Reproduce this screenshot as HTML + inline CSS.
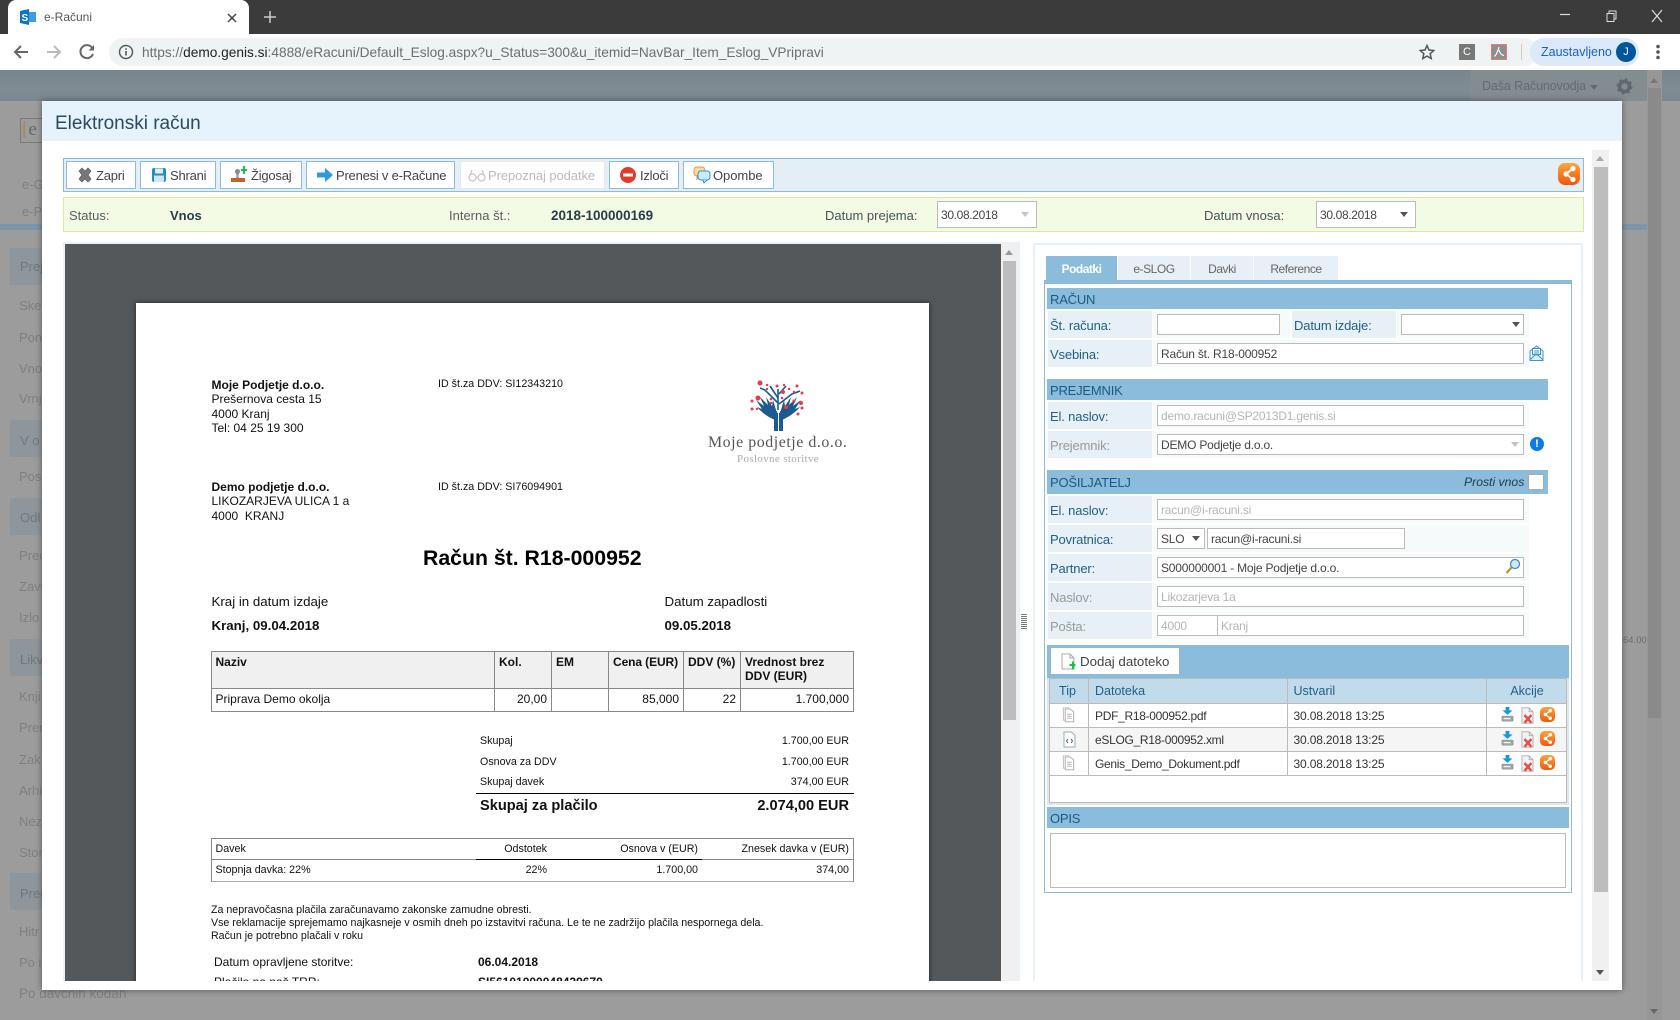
<!DOCTYPE html>
<html lang="sl"><head><meta charset="utf-8"><title>e-Računi</title>
<style>
*{box-sizing:border-box}
html,body{margin:0;padding:0;width:1680px;height:1020px;overflow:hidden;background:#9c9c9c}
body{position:relative;font-family:"Liberation Sans",sans-serif;font-size:13px;color:#333}
.a{position:absolute;white-space:nowrap}
.t{position:absolute;white-space:nowrap;line-height:18px;height:18px}
.side{color:#7b8083;font-size:13px}
.blk{background:#8f969b;left:10px;width:32px;height:37px;position:absolute}
.btn{position:absolute;top:161px;height:28px;background:#fff;border:1px solid #8bbcdc;color:#444;font-size:13px;letter-spacing:-.22px;line-height:28px}
.btn svg{position:absolute;top:4px;width:18px;height:18px}
.btn span{position:absolute;top:0}
.sec{position:absolute;left:1047px;width:501px;background:#8bbcdc;color:#1a5a82;font-size:13px;letter-spacing:-.2px;line-height:23px;padding-left:3px;height:21px}
.lb{position:absolute;left:1048px;width:104px;height:27px;background:#e6f0f6;color:#1f5f85;font-size:13px;letter-spacing:-.15px;line-height:29px;padding-left:2px}
.lb.d{color:#999}
.fc{position:absolute;left:1153px;width:376px;height:27px;background:#f6fafb}
.in{position:absolute;height:21px;background:#fff;border:1px solid #bbb;font-size:12px;letter-spacing:-.2px;line-height:21px;padding-left:3px;color:#444}
.in.g{color:#b5b5b5}
.arr{position:absolute;width:0;height:0;border-left:4px solid transparent;border-right:4px solid transparent;border-top:5px solid #555}
.tab{position:absolute;top:256px;height:24px;background:#e6f0f6;color:#666;font-size:12px;letter-spacing:-.45px;line-height:26px;text-align:center}
.th{position:absolute;top:678px;height:26px;background:#c1dbeb;color:#1f6088;font-size:12.5px;line-height:27px;border-right:1px solid #bbb;border-bottom:1px solid #bbb}
.td{position:absolute;height:24px;border-right:1px solid #bbb;border-bottom:1px solid #bbb;font-size:12px;letter-spacing:-.3px;line-height:25px;color:#333;background:#fff}
.d2{letter-spacing:-.16px}
.alt{background:#f5f5f5}
.inv{position:absolute;white-space:nowrap;color:#111;font-size:12px;line-height:14px}
.s{font-size:10.7px}
.b{font-weight:bold}
.ln{position:absolute;background:#888}
.r{text-align:right}
</style></head><body>

<svg width="0" height="0" style="position:absolute">
<defs>
<linearGradient id="og" x1="0" y1="0" x2="0" y2="1"><stop offset="0" stop-color="#ffa43c"/><stop offset="1" stop-color="#f2570c"/></linearGradient>
<symbol id="share" viewBox="0 0 22 22"><rect x="0" y="0" width="22" height="22" rx="7" fill="url(#og)"/><path d="M15 5.500 L8 11 L15 16.500" fill="none" stroke="#fff" stroke-width="1.800"/><circle cx="15" cy="5.500" r="2.600" fill="#fff"/><circle cx="8" cy="11" r="2.600" fill="#fff"/><circle cx="15" cy="16.500" r="2.600" fill="#fff"/></symbol>
<symbol id="file" viewBox="0 0 16 20" preserveAspectRatio="none"><path d="M4.500 2.500H10l3.500 3.500V18.500H4.500Z" fill="#fff" stroke="#aaa"/><path d="M2.500 1H8L11 4" fill="none" stroke="#bbb"/><path d="M2.500 1V16.500H4.500" fill="none" stroke="#bbb"/><path d="M6.500 9h5M6.500 11.500h5M6.500 14h5" stroke="#aaa"/></symbol>
<symbol id="dl" viewBox="0 0 14 18" preserveAspectRatio="none"><rect x="1" y="11" width="12" height="6" rx="1" fill="#a8acae" stroke="#777" stroke-width=".6"/><rect x="3" y="13.400" width="8" height="1.200" fill="#fff"/><circle cx="11" cy="14" r=".8" fill="#4c4"/><path d="M5 0h4v4h3.500L7 9.500 1.500 4H5Z" fill="#129be4"/></symbol>
<symbol id="del" viewBox="0 0 15 20"><path d="M1 1H9.500L14 5.500V19H1Z" fill="#f2f2f2" stroke="#aaa"/><path d="M9.500 1V5.500H14" fill="none" stroke="#aaa"/><path d="M4 9.500l8 9M12 9.500l-8 9" stroke="#e3524a" stroke-width="3"/></symbol>
</defs></svg>

<!-- chrome -->
<div class="a" style="left:0;top:0;width:1680px;height:34px;background:#3b3b3b"></div>
<div class="a" style="left:8px;top:0;width:241px;height:34px;background:#fff;border-radius:8px 8px 0 0"></div>
<svg class="a" style="left:20px;top:9px" width="17" height="16"><path d="M0 2l9-2v16l-9-2Z" fill="#0d72c4"/><rect x="9" y="3" width="7" height="10" fill="#3d9be0"/><text x="1.500" y="12" font-family="Liberation Sans" font-weight="bold" font-size="10" fill="#fff">S</text></svg>
<div class="t" style="left:44px;top:8px;font-size:12px;color:#555">e-Računi</div>
<svg class="a" style="left:226px;top:12px" width="12" height="12"><path d="M2 2l8 8M10 2l-8 8" stroke="#444" stroke-width="1.500"/></svg>
<svg class="a" style="left:263px;top:10px" width="14" height="14"><path d="M7 1v12M1 7h12" stroke="#ccc" stroke-width="1.500"/></svg>
<svg class="a" style="left:1558px;top:8px" width="110" height="16" fill="none" stroke="#ddd"><path d="M2 6.500h10" stroke-width="1.200"/><path d="M49 5.500h7v8h-7zM51 5.500V3h7v8h-2" /><path d="M94 2l10 12M104 2L94 14" stroke-width="1.200"/></svg>
<div class="a" style="left:0;top:34px;width:1680px;height:36px;background:#fff"></div>
<svg class="a" style="left:12px;top:43px" width="88" height="18" fill="none" stroke-width="2"><path d="M16 9H3M9 3L3 9l6 6" stroke="#666"/><path d="M35 9h13M42 3l6 6-6 6" stroke="#bbb"/><path d="M80 4.500A6.500 6.500 0 1 0 81 11" stroke="#666"/><path d="M82 2v5.500h-5.500Z" fill="#666" stroke="none"/></svg>
<div class="a" style="left:109px;top:38px;width:1429px;height:28px;background:#eff3f4;border-radius:14px"></div>
<svg class="a" style="left:118px;top:44px" width="16" height="16" fill="none"><circle cx="8" cy="8" r="6.500" stroke="#555" stroke-width="1.400"/><path d="M8 7v4.500M8 4.300v1.400" stroke="#555" stroke-width="1.600"/></svg>
<div class="t" style="left:142px;top:44px;font-size:13.700px;color:#6c6f72">https://<span style="color:#222">demo.genis.si</span>:4888/eRacuni/Default_Eslog.aspx?u_Status=300&amp;u_itemid=NavBar_Item_Eslog_VPripravi</div>
<svg class="a" style="left:1419px;top:44px" width="16" height="16"><path d="M8 1.500l2 4.500 4.800.5-3.600 3.200 1 4.800L8 12.100l-4.200 2.400 1-4.800L1.200 6.500 6 6Z" fill="none" stroke="#555" stroke-width="1.500"/></svg>
<div class="a" style="left:1459px;top:44px;width:16px;height:16px;background:#777;color:#fff;font-size:11px;line-height:16px;text-align:center">C</div>
<svg class="a" style="left:1491px;top:44px" width="16" height="16"><rect x=".5" y=".5" width="15" height="15" fill="#8e8e8e" stroke="#e77"/><path d="M8 3c-1 4-2 7-4.500 9.500M8 6c1 3 2 5 5 5.500" fill="none" stroke="#fff" stroke-width="1.200"/></svg>
<div class="a" style="left:1521px;top:44px;width:1px;height:16px;background:#ccc"></div>
<div class="a" style="left:1530px;top:38px;width:109px;height:28px;background:#dce9f8;border-radius:14px"></div>
<div class="t" style="left:1541px;top:43px;font-size:12.500px;color:#1a5fd0">Zaustavljeno</div>
<div class="a" style="left:1616px;top:42px;width:20px;height:20px;background:#00579c;border-radius:50%;color:#fff;font-size:11px;line-height:20px;text-align:center">J</div>
<svg class="a" style="left:1655px;top:44px" width="6" height="16" fill="#555"><circle cx="3" cy="2.500" r="1.800"/><circle cx="3" cy="8" r="1.800"/><circle cx="3" cy="13.500" r="1.800"/></svg>

<!-- dim background -->
<div class="a" style="left:0;top:70px;width:1680px;height:31px;background:linear-gradient(#78858d,#7f8c94 60%,#7a878f)"></div>
<div class="a" style="left:1470px;top:70px;width:177px;height:31px;background:#838c91"></div>
<div class="t" style="left:1482px;top:77px;color:#626b71;font-size:12.500px;letter-spacing:-.1px">Daša Računovodja</div>
<div class="arr" style="left:1590px;top:85px;border-top-color:#626b71"></div>
<svg class="a" style="left:1616px;top:78px" width="17" height="17"><circle cx="8.500" cy="8.500" r="5" fill="none" stroke="#5f686e" stroke-width="3.500"/><circle cx="8.500" cy="8.500" r="7" fill="none" stroke="#5f686e" stroke-width="2" stroke-dasharray="2.500 3"/></svg>
<div class="a" style="left:1647px;top:70px;width:15px;height:950px;background:#979797"></div>
<div class="a" style="left:1648px;top:88px;width:13px;height:630px;background:#8a8a8a"></div>
<div class="arr" style="left:1650px;top:78px;border-top:0;border-bottom:5px solid #777"></div>
<div class="arr" style="left:1650px;top:1009px;border-top-color:#666"></div>
<div class="a" style="left:1622px;top:224px;width:25px;height:6px;background:#7d95a8"></div>
<div class="t" style="left:1623px;top:632px;font-size:9.500px;color:#6d6d6d">64.00</div>

<div class="a" style="left:20px;top:118px;width:22px;height:25px;border:1px solid #7a7a7a;border-right:0;color:#666;font:19px/22px 'Liberation Serif',serif;padding-left:1px"><span style="color:#a08a55">[</span>e</div>
<div class="t side" style="left:22px;top:176px">e-G</div>
<div class="t side" style="left:22px;top:203px">e-P</div>
<div class="a" style="left:0;top:224px;width:42px;height:6px;background:#7d95a8"></div>

<div class="blk" style="top:248px"></div><div class="t side" style="left:20px;top:258px;color:#6d7880">Prej</div>
<div class="t side" style="left:19px;top:297px">Sker</div>
<div class="t side" style="left:19px;top:329px">Pon</div>
<div class="t side" style="left:19px;top:360px">Vno</div>
<div class="t side" style="left:19px;top:390px">Vrnj</div>
<div class="blk" style="top:420px"></div><div class="t side" style="left:20px;top:432px;color:#6d7880">V o</div>
<div class="t side" style="left:19px;top:468px">Posl</div>
<div class="blk" style="top:498px"></div><div class="t side" style="left:20px;top:509px;color:#6d7880">Odl</div>
<div class="t side" style="left:19px;top:547px">Prec</div>
<div class="t side" style="left:19px;top:578px">Zavr</div>
<div class="t side" style="left:19px;top:609px">Izlo</div>
<div class="blk" style="top:639px"></div><div class="t side" style="left:20px;top:651px;color:#6d7880">Likv</div>
<div class="t side" style="left:19px;top:688px">Knji</div>
<div class="t side" style="left:19px;top:719px">Pren</div>
<div class="t side" style="left:19px;top:751px">Zak</div>
<div class="t side" style="left:19px;top:782px">Arhi</div>
<div class="t side" style="left:19px;top:813px">Nez</div>
<div class="t side" style="left:19px;top:844px">Stor</div>
<div class="blk" style="top:873px"></div><div class="t side" style="left:20px;top:885px;color:#6d7880">Preg</div>
<div class="t side" style="left:19px;top:923px">Hitr</div>
<div class="t side" style="left:19px;top:954px">Po i</div>
<div class="t side" style="left:19px;top:985px;font-size:13.500px">Po davčnih kodah</div>

<!-- modal -->
<div class="a" style="left:42px;top:101px;width:1580px;height:889px;background:#fff;box-shadow:0 0 6px rgba(0,0,0,.45)"></div>
<div class="a" style="left:42px;top:101px;width:1580px;height:40px;background:#e6f2fc"></div>
<div class="t" style="left:55px;top:111px;font-size:19px;line-height:26px;height:26px;color:#2c4a63">Elektronski račun</div>

<!-- toolbar -->
<div class="a" style="left:63px;top:158px;width:1521px;height:34px;background:#e4eff5;border:1px solid #8bbcdc"></div>
<div class="btn" style="left:66px;width:70px"><svg style="left:9px" viewBox="0 0 18 18"><path d="M3 5l3-3 3 3 3-3 3 3-3 4 3 4-3 3-3-3-3 3-3-3 3-4Z" fill="#777" stroke="#5c5c5c" stroke-width=".7"/></svg><span style="left:29px">Zapri</span></div>
<div class="btn" style="left:140px;width:76px"><svg style="left:9px" viewBox="0 0 18 18"><rect x="2" y="2" width="14" height="14" rx="2" fill="#2b8cc4"/><rect x="5" y="2.500" width="8" height="5" fill="#dff0fa"/><rect x="4" y="9.500" width="10" height="6.500" fill="#cfe6f4"/></svg><span style="left:29px">Shrani</span></div>
<div class="btn" style="left:220px;width:82px"><svg style="left:9px" viewBox="0 0 18 18"><rect x="1" y="12" width="14" height="4" fill="#c2622a"/><path d="M6 12c1-3 0-3 0-5h3c0 2-1 2 0 5Z" fill="#999"/><circle cx="7.500" cy="5.500" r="2.500" fill="#8a8a8a"/><path d="M11 3h2V0h2v3h2v2h-2v3h-2V5h-2Z" fill="#1ec04c"/></svg><span style="left:30px">Žigosaj</span></div>
<div class="btn" style="left:306px;width:149px"><svg style="left:9px" viewBox="0 0 18 18"><path d="M1 6.500h8V2l8 7-8 7v-4.500H1Z" fill="#2a9be0"/></svg><span style="left:29px">Prenesi v e-Račune</span></div>
<div class="btn" style="left:460px;width:145px;border-color:#e8e8e8;color:#bbb;letter-spacing:-.08px"><svg style="left:7px" viewBox="0 0 18 18" fill="none" stroke="#c5c5c5" stroke-width="1.200"><circle cx="4.500" cy="11.500" r="3.500"/><circle cx="13.500" cy="11.500" r="3.500"/><path d="M8 11.500h2M2 9l2-5M16 9l-2-5"/></svg><span style="left:27px">Prepoznaj podatke</span></div>
<div class="btn" style="left:609px;width:70px"><svg style="left:9px" viewBox="0 0 18 18"><circle cx="9" cy="9" r="8" fill="#e43a2c"/><rect x="4" y="7.500" width="10" height="3" fill="#fff"/></svg><span style="left:30px">Izloči</span></div>
<div class="btn" style="left:683px;width:91px;letter-spacing:-.05px"><svg style="left:9px" viewBox="0 0 18 18"><rect x="1" y="1" width="11" height="9" rx="3" fill="#f8d9a0" stroke="#e8974a"/><path d="M4 9l0 4 3-3" fill="#f8d9a0" stroke="#e8974a"/><rect x="5" y="5" width="12" height="9" rx="3" fill="#c8ecfa" stroke="#2b93c8"/><path d="M10 14l1 3 3-3" fill="#c8ecfa" stroke="#2b93c8"/></svg><span style="left:29px">Opombe</span></div>
<svg class="a" style="left:1558px;top:163px" width="22" height="22"><use href="#share"/></svg>

<!-- status bar -->
<div class="a" style="left:63px;top:197px;width:1521px;height:35px;background:#f4fbe4;border:1px solid #d7eb9f"></div>
<div class="t" style="left:69px;top:207px;color:#555e65">Status:</div>
<div class="t b" style="left:170px;top:207px;color:#2a3c4c">Vnos</div>
<div class="t" style="left:449px;top:207px;color:#555e65">Interna št.:</div>
<div class="t b" style="left:551px;top:207px;color:#2a3c4c;font-size:13.500px">2018-100000169</div>
<div class="t" style="left:825px;top:207px;color:#45525c">Datum prejema:</div>
<div class="in" style="left:937px;top:201px;width:100px;height:27px;line-height:27px;letter-spacing:-.35px">30.08.2018</div>
<div class="arr" style="left:1021px;top:212px;border-top-color:#c5c5c5"></div>
<div class="t" style="left:1204px;top:207px;color:#45525c">Datum vnosa:</div>
<div class="in" style="left:1316px;top:201px;width:100px;height:27px;line-height:27px;letter-spacing:-.35px">30.08.2018</div>
<div class="arr" style="left:1400px;top:212px;border-top-color:#555"></div>

<!-- scrollbar of modal -->
<div class="a" style="left:1592px;top:150px;width:17px;height:831px;background:#f0f0f0"></div>
<div class="a" style="left:1594px;top:167px;width:14px;height:725px;background:#bdbdbd"></div>
<div class="arr" style="left:1596px;top:156px;border-top:0;border-bottom:5px solid #aaa"></div>
<div class="arr" style="left:1596px;top:970px;border-top-color:#555"></div>

<!-- panes -->
<div class="a" style="left:63px;top:242px;width:956px;height:739px;border:2px solid #e6f2f8;border-bottom:0;border-right:0"></div>
<div class="a" style="left:1018px;top:242px;width:2px;height:739px;background:#e6f2f8"></div>
<div class="a" style="left:1033px;top:243px;width:550px;height:738px;border:2px solid #e6f2f8;border-bottom:0"></div>
<div class="a" style="left:1021px;top:614px;width:6px;height:16px;background:repeating-linear-gradient(#777 0 1px,#fff 1px 2px)"></div>

<!-- PDF viewer -->
<div class="a" style="left:65px;top:244px;width:936px;height:737px;background:#54585b;overflow:hidden">
  <div class="a" style="left:71px;top:59px;width:793px;height:700px;background:#fff;box-shadow:0 0 5px rgba(0,0,0,.6)"></div>
</div>
<div class="a" style="left:1001px;top:244px;width:17px;height:737px;background:#f0f0f0"></div>
<div class="a" style="left:1003px;top:261px;width:13px;height:459px;background:#bdbdbd"></div>
<div class="arr" style="left:1005px;top:250px;border-top:0;border-bottom:5px solid #999"></div>

<div class="a" style="left:0;top:0;width:1680px;height:981px;overflow:hidden;pointer-events:none">
<div class="inv b" style="left:211.500px;top:378px">Moje Podjetje d.o.o.</div>
<div class="inv" style="left:211.500px;top:392px">Prešernova cesta 15</div>
<div class="inv" style="left:211.500px;top:407px">4000 Kranj</div>
<div class="inv" style="left:211.500px;top:421px">Tel: 04 25 19 300</div>
<div class="inv s" style="left:438px;top:377px">ID št.za DDV: SI12343210</div>
<div class="inv b" style="left:211.500px;top:480px">Demo podjetje d.o.o.</div>
<div class="inv" style="left:211.500px;top:494px">LIKOZARJEVA ULICA 1 a</div>
<div class="inv" style="left:211.500px;top:509px">4000&nbsp; KRANJ</div>
<div class="inv s" style="left:438px;top:480px">ID št.za DDV: SI76094901</div>

<svg class="a" style="left:700px;top:376px" width="160" height="60">
<g fill="#1c5b8f"><rect x="74" y="37" width="4" height="18"/><rect x="79" y="37" width="4" height="18"/>
<path d="M78 45C72 43 64 39 57 31L62 33 56 24 64 30 60 21 68 29 66 21 72 30 73 24 76 34 78 38Z"/>
<path d="M79 45C85 43 93 39 100 31L95 33 101 24 93 30 97 21 89 29 91 21 85 30 84 24 81 34 79 38Z"/></g>
<path d="M78 34V13M78 27L65 14 60 12M78 22L70 10M79 28L92 18 100 15M79 18L86 10" fill="none" stroke="#1c5b8f" stroke-width="1.600"/>
<g fill="#e83a4c"><circle cx="60" cy="7" r="2.500"/><circle cx="67" cy="9" r="1.200"/><circle cx="67" cy="13" r="1.200"/><circle cx="77" cy="10" r="1.500"/><circle cx="84" cy="9" r="1.200"/><circle cx="97" cy="10" r="1.500"/><circle cx="89" cy="13" r="1.200"/><circle cx="83" cy="16" r="2"/><circle cx="94" cy="16" r="1.200"/><circle cx="102" cy="17" r="1.500"/><circle cx="52" cy="25" r="1.500"/><circle cx="58" cy="22" r="2.500"/><circle cx="71" cy="23" r="1.300"/><circle cx="71" cy="27" r="1.300"/><circle cx="82" cy="22" r="1.300"/><circle cx="94" cy="25" r="1.500"/><circle cx="101" cy="27" r="2"/><circle cx="52" cy="33" r="1.500"/><circle cx="57" cy="33" r="1.200"/><circle cx="86" cy="31" r="2"/><circle cx="102" cy="32" r="1.500"/><circle cx="98" cy="38" r="1.500"/></g>
</svg>
<div class="a" style="left:708px;top:434px;font:15.900px/18px 'Liberation Serif',serif;color:#555;letter-spacing:.55px">Moje podjetje d.o.o.</div>
<div class="a" style="left:737px;top:453px;font:11px/13px 'Liberation Serif',serif;color:#aaa;letter-spacing:.35px">Poslovne storitve</div>

<div class="inv b" style="left:423px;top:545px;font-size:21.250px;line-height:26px;color:#000">Račun št. R18-000952</div>
<div class="inv" style="left:211.500px;top:594px;font-size:13.300px;line-height:16px">Kraj in datum izdaje</div>
<div class="inv b" style="left:211.500px;top:618px;font-size:13.300px;line-height:16px">Kranj, 09.04.2018</div>
<div class="inv" style="left:664.500px;top:594px;font-size:13.300px;line-height:16px">Datum zapadlosti</div>
<div class="inv b" style="left:664.500px;top:618px;font-size:13.300px;line-height:16px">09.05.2018</div>

<!-- item table -->
<div class="a" style="left:211px;top:651px;width:643px;height:37px;background:#f0f0f0"></div>
<div class="ln" style="left:211px;top:651px;width:643px;height:1px"></div>
<div class="ln" style="left:211px;top:688px;width:643px;height:1px"></div>
<div class="ln" style="left:211px;top:711px;width:643px;height:1px"></div>
<div class="ln" style="left:211px;top:651px;width:1px;height:61px"></div>
<div class="ln" style="left:494px;top:651px;width:1px;height:61px"></div>
<div class="ln" style="left:551px;top:651px;width:1px;height:61px"></div>
<div class="ln" style="left:608px;top:651px;width:1px;height:61px"></div>
<div class="ln" style="left:683px;top:651px;width:1px;height:61px"></div>
<div class="ln" style="left:740px;top:651px;width:1px;height:61px"></div>
<div class="ln" style="left:853px;top:651px;width:1px;height:61px"></div>
<div class="inv b" style="left:215.500px;top:655px">Naziv</div>
<div class="inv b" style="left:499px;top:655px">Kol.</div>
<div class="inv b" style="left:556px;top:655px">EM</div>
<div class="inv b" style="left:613px;top:655px;letter-spacing:-.1px">Cena (EUR)</div>
<div class="inv b" style="left:688px;top:655px">DDV (%)</div>
<div class="inv b" style="left:745px;top:655px">Vrednost brez</div>
<div class="inv b" style="left:745px;top:669px">DDV (EUR)</div>
<div class="inv" style="left:215.500px;top:692px">Priprava Demo okolja</div>
<div class="inv r" style="left:494px;width:53px;top:692px">20,00</div>
<div class="inv r" style="left:608px;width:71px;top:692px">85,000</div>
<div class="inv r" style="left:683px;width:53px;top:692px">22</div>
<div class="inv r" style="left:740px;width:109px;top:692px">1.700,000</div>

<!-- totals -->
<div class="inv s" style="left:480px;top:734px">Skupaj</div><div class="inv s r" style="left:650px;width:199px;top:734px">1.700,00 EUR</div>
<div class="inv s" style="left:480px;top:755px">Osnova za DDV</div><div class="inv s r" style="left:650px;width:199px;top:755px">1.700,00 EUR</div>
<div class="inv s" style="left:480px;top:775px">Skupaj davek</div><div class="inv s r" style="left:650px;width:199px;top:775px">374,00 EUR</div>
<div class="ln" style="left:476px;top:793px;width:378px;height:1px;background:#000"></div>
<div class="inv b" style="left:480px;top:798px;font-size:14.600px;line-height:16px">Skupaj za plačilo</div>
<div class="inv b r" style="left:650px;width:199px;top:798px;font-size:14.600px;line-height:16px">2.074,00 EUR</div>

<!-- tax table -->
<div class="ln" style="left:211px;top:838px;width:643px;height:1px"></div>
<div class="ln" style="left:211px;top:859px;width:265px;height:1px"></div>
<div class="ln" style="left:476px;top:859px;width:226px;height:1px;background:#000"></div>
<div class="ln" style="left:702px;top:859px;width:152px;height:1px"></div>
<div class="ln" style="left:211px;top:881px;width:643px;height:1px;background:#aaa"></div>
<div class="ln" style="left:211px;top:838px;width:1px;height:44px"></div>
<div class="ln" style="left:853px;top:838px;width:1px;height:44px"></div>
<div class="inv s" style="left:215.500px;top:842px">Davek</div>
<div class="inv s r" style="left:476px;width:71px;top:842px">Odstotek</div>
<div class="inv s r" style="left:551px;width:147px;top:842px">Osnova v (EUR)</div>
<div class="inv s r" style="left:702px;width:147px;top:842px">Znesek davka v (EUR)</div>
<div class="inv s" style="left:215.500px;top:863px">Stopnja davka: 22%</div>
<div class="inv s r" style="left:476px;width:71px;top:863px">22%</div>
<div class="inv s r" style="left:551px;width:147px;top:863px">1.700,00</div>
<div class="inv s r" style="left:702px;width:147px;top:863px">374,00</div>

<div class="inv" style="left:211px;top:904px;line-height:13.200px;font-size:10.650px">Za nepravočasna plačila zaračunavamo zakonske zamudne obresti.<br>Vse reklamacije sprejemamo najkasneje v osmih dneh po izstavitvi računa. Le te ne zadržijo plačila nespornega dela.<br>Račun je potrebno plačali v roku</div>
<div class="inv" style="left:214px;top:955px">Datum opravljene storitve:</div>
<div class="inv b" style="left:478px;top:955px">06.04.2018</div>
<div class="inv" style="left:214px;top:975px">Plačilo na naš TRR:</div>
<div class="inv b" style="left:478px;top:975px">SI56101000048429670</div>
</div>

<!-- tabs -->
<div class="tab" style="left:1046px;width:71px;background:#8bbcdc;color:#fff;font-weight:bold;letter-spacing:-.5px">Podatki</div>
<div class="tab" style="left:1118px;width:72px">e-SLOG</div>
<div class="tab" style="left:1191px;width:62px">Davki</div>
<div class="tab" style="left:1254px;width:84px">Reference</div>
<div class="a" style="left:1044px;top:280px;width:528px;height:613px;border:1px solid #8bbcdc;border-top:4px solid #8bbcdc;background:#fff"></div>

<div class="sec" style="top:288px">RAČUN</div>
<div class="lb" style="top:311px">Št. računa:</div><div class="fc" style="top:311px;width:137px"></div>
<div class="in" style="left:1157px;top:314px;width:123px"></div>
<div class="lb" style="top:311px;left:1292px">Datum izdaje:</div><div class="fc" style="top:311px;left:1397px;width:132px"></div>
<div class="in" style="left:1401px;top:314px;width:123px"></div><div class="arr" style="left:1512px;top:322px"></div>
<div class="lb" style="top:340px">Vsebina:</div><div class="fc" style="top:340px"></div>
<div class="in" style="left:1157px;top:343px;width:367px">Račun št. R18-000952</div>
<svg class="a" style="left:1529px;top:345px" width="15" height="17" fill="none" stroke="#3c9ac8"><path d="M1 6L7.500 1 14 6V15.500H1Z" fill="#e4f3fa"/><rect x="3.500" y="3.500" width="8" height="6" fill="#fff"/><path d="M1 15l5-5h3l5 5M5 6h5M5 8h5"/></svg>

<div class="sec" style="top:379px">PREJEMNIK</div>
<div class="lb" style="top:402px">El. naslov:</div><div class="fc" style="top:402px"></div>
<div class="in g" style="left:1157px;top:405px;width:367px">demo.racuni@SP2013D1.genis.si</div>
<div class="lb d" style="top:431px">Prejemnik:</div><div class="fc" style="top:431px"></div>
<div class="in" style="left:1157px;top:434px;width:367px">DEMO Podjetje d.o.o.</div><div class="arr" style="left:1511px;top:442px;border-top-color:#c5c5c5"></div>
<div class="a" style="left:1530px;top:437px;width:14px;height:14px;border-radius:50%;background:#0c7be8;color:#fff;font:bold 11px/14px 'Liberation Sans',sans-serif;text-align:center">!</div>

<div class="sec" style="top:470px;height:24px;line-height:25px">POŠILJATELJ</div>
<div class="t" style="left:1464px;top:473px;font-style:italic;color:#1f3a4c;font-size:12.200px">Prosti vnos</div>
<div class="a" style="left:1528px;top:474px;width:16px;height:16px;background:#fff;border:1px solid #aaa"></div>
<div class="lb" style="top:496px">El. naslov:</div><div class="fc" style="top:496px"></div>
<div class="in g" style="left:1157px;top:499px;width:367px">racun@i-racuni.si</div>
<div class="lb" style="top:525px">Povratnica:</div><div class="fc" style="top:525px"></div>
<div class="in" style="left:1157px;top:528px;width:48px">SLO</div><div class="arr" style="left:1192px;top:536px"></div>
<div class="in" style="left:1207px;top:528px;width:198px">racun@i-racuni.si</div>
<div class="lb" style="top:554px">Partner:</div><div class="fc" style="top:554px"></div>
<div class="in" style="left:1157px;top:557px;width:367px">S000000001 - Moje Podjetje d.o.o.</div>
<svg class="a" style="left:1505px;top:558px" width="16" height="17" fill="none"><circle cx="10" cy="6" r="4.500" fill="#cfe8f8" stroke="#3a86c0" stroke-width="1.200"/><path d="M6.500 9.500L1.500 15" stroke="#b8913c" stroke-width="2.200"/></svg>
<div class="lb d" style="top:583px">Naslov:</div><div class="fc" style="top:583px"></div>
<div class="in g" style="left:1157px;top:586px;width:367px">Likozarjeva 1a</div>
<div class="lb d" style="top:612px">Pošta:</div><div class="fc" style="top:612px"></div>
<div class="in g" style="left:1157px;top:615px;width:61px">4000</div>
<div class="in g" style="left:1217px;top:615px;width:307px">Kranj</div>

<!-- attachments -->
<div class="a" style="left:1047px;top:645px;width:522px;height:160px;background:#fff;border:2px solid #dfe7ec;border-top:0"></div>
<div class="a" style="left:1047px;top:645px;width:522px;height:33px;background:#8bbcdc"></div>
<div class="a" style="left:1051px;top:648px;width:128px;height:26px;background:#fff"></div>
<svg class="a" style="left:1061px;top:653px" width="16" height="18"><path d="M1 1H9l4 4V16H1Z" fill="#fff" stroke="#a8a8a8"/><path d="M9 1V5h4" fill="none" stroke="#a8a8a8"/><path d="M9.500 10h2.500V7.500h2V10h1.500v2h-1.500v3.500h-2V12H9.500Z" fill="#1ebc4c" transform="translate(-1 1)"/></svg>
<div class="t" style="left:1080px;top:653px;color:#444;font-size:13.300px">Dodaj datoteko</div>

<div class="a" style="left:1049px;top:678px;width:518px;height:125px;border:1px solid #bbb;background:#fff"></div>
<div class="th" style="left:1049px;width:40px;text-align:center;padding-right:2px">Tip</div>
<div class="th" style="left:1089px;width:199px;padding-left:6px">Datoteka</div>
<div class="th" style="left:1288px;width:199px;padding-left:5.500px">Ustvaril</div>
<div class="th" style="left:1487px;width:80px;text-align:center;border-right:0">Akcije</div>

<div class="td" style="left:1049px;top:704px;width:40px"></div><div class="td" style="left:1089px;top:704px;width:199px;padding-left:6px">PDF_R18-000952.pdf</div><div class="td d2" style="left:1288px;top:704px;width:199px;padding-left:5.500px">30.08.2018 13:25</div><div class="td" style="left:1487px;top:704px;width:80px;border-right:0"></div>
<div class="td alt" style="left:1049px;top:728px;width:40px"></div><div class="td alt" style="left:1089px;top:728px;width:199px;padding-left:6px">eSLOG_R18-000952.xml</div><div class="td alt d2" style="left:1288px;top:728px;width:199px;padding-left:5.500px">30.08.2018 13:25</div><div class="td alt" style="left:1487px;top:728px;width:80px;border-right:0"></div>
<div class="td" style="left:1049px;top:752px;width:40px"></div><div class="td" style="left:1089px;top:752px;width:199px;padding-left:6px">Genis_Demo_Dokument.pdf</div><div class="td d2" style="left:1288px;top:752px;width:199px;padding-left:5.500px">30.08.2018 13:25</div><div class="td" style="left:1487px;top:752px;width:80px;border-right:0"></div>
<div class="a" style="left:1049px;top:678px;width:518px;height:125px;border:1px solid #bbb"></div>

<svg class="a" style="left:1061px;top:707px" width="15" height="16"><use href="#file" width="15" height="16"/></svg>
<svg class="a" style="left:1063px;top:731px" width="13" height="17" fill="none" stroke="#8fb0b8"><path d="M1 1H8.500L12 4.500V16H1Z" fill="#fff"/><path d="M5 8L3.500 10 5 12M8 8l1.500 2L8 12" stroke="#555"/></svg>
<svg class="a" style="left:1061px;top:755px" width="15" height="16"><use href="#file" width="15" height="16"/></svg>

<svg class="a" style="left:1501px;top:707px" width="13" height="15"><use href="#dl" width="13" height="15"/></svg>
<svg class="a" style="left:1521px;top:707px" width="13" height="17"><use href="#del"/></svg>
<svg class="a" style="left:1540px;top:707px" width="15" height="15"><use href="#share"/></svg>
<svg class="a" style="left:1501px;top:731px" width="13" height="15"><use href="#dl" width="13" height="15"/></svg>
<svg class="a" style="left:1521px;top:731px" width="13" height="17"><use href="#del"/></svg>
<svg class="a" style="left:1540px;top:731px" width="15" height="15"><use href="#share"/></svg>
<svg class="a" style="left:1501px;top:755px" width="13" height="15"><use href="#dl" width="13" height="15"/></svg>
<svg class="a" style="left:1521px;top:755px" width="13" height="17"><use href="#del"/></svg>
<svg class="a" style="left:1540px;top:755px" width="15" height="15"><use href="#share"/></svg>

<div class="sec" style="top:807px;width:522px">OPIS</div>
<div class="a" style="left:1050px;top:833px;width:516px;height:55px;background:#fff;border:1px solid #bbb"></div>
</body></html>
